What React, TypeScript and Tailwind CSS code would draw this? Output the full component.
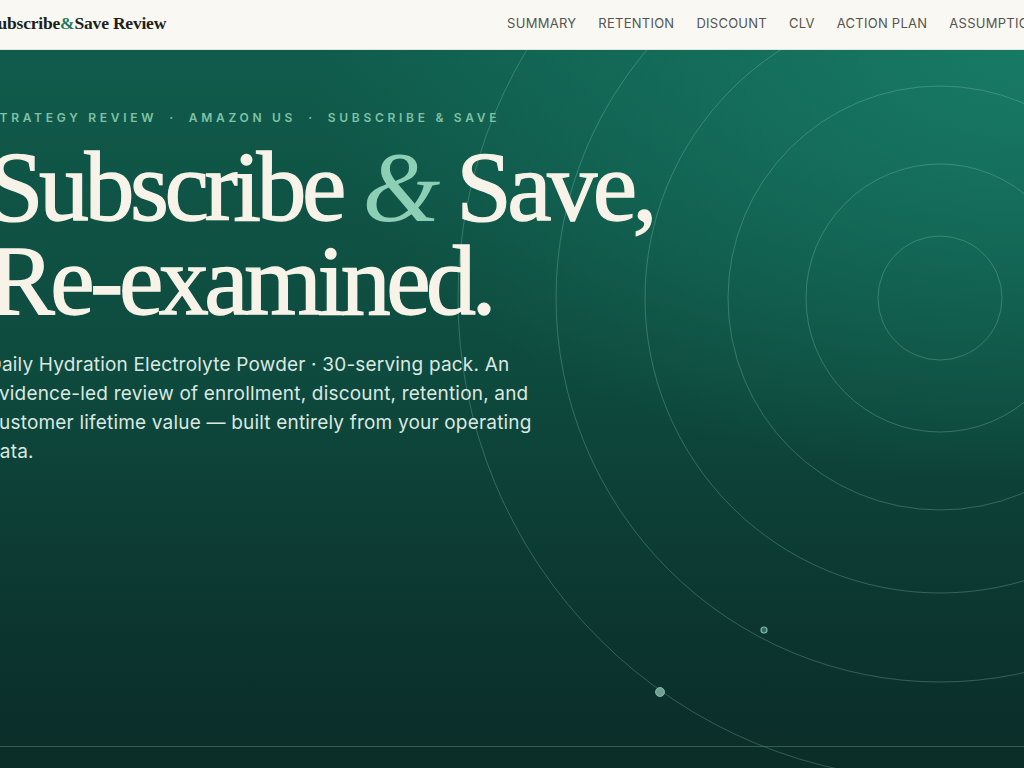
import React from "react"

const rings = [62, 134, 212, 295, 384, 482]

export default function App() {
  return (
    <div className="w-[1024px] h-[768px] overflow-hidden bg-[#0c3a31]" style={{ fontFamily: "Inter, 'Noto Sans', sans-serif" }}>
      {/* top bar */}
      <header className="h-[50px] bg-[#f9f8f3] border-b border-[#dfe6df] flex items-center overflow-hidden">
        <div className="flex items-center -ml-[12px] -mt-[2px] shrink-0 whitespace-nowrap">
          <a className="text-[17.5px] font-bold text-[#1c1f1c] tracking-[-0.2px]" style={{ fontFamily: "'Liberation Serif', serif" }}>
            Subscribe<span className="text-[#1f7a5e]">&amp;</span>Save Review
          </a>
          <nav className="ml-[341px] flex gap-[22px] text-[13px] tracking-[0.02em] text-[#55554f]">
            <a>SUMMARY</a>
            <a>RETENTION</a>
            <a>DISCOUNT</a>
            <a>CLV</a>
            <a>ACTION PLAN</a>
            <a>ASSUMPTIONS</a>
          </nav>
        </div>
      </header>

      {/* hero */}
      <section className="relative h-[718px] overflow-hidden bg-[radial-gradient(ellipse_70%_60%_at_100%_0%,#177a65_0%,rgba(23,122,101,0)_100%),linear-gradient(180deg,#105c4c_0%,#0e4a3e_45%,#0c3530_80%,#0b2d28_100%)]">
        <svg className="absolute inset-0" width="1024" height="718" viewBox="0 0 1024 718" fill="none">
          {rings.map((r) => (
            <circle key={r} cx="940" cy="248" r={r} stroke="#9fd8c2" strokeOpacity="0.28" strokeWidth="1" />
          ))}
          <circle cx="764" cy="580" r="3" fill="#2f6d5d" stroke="#9fd0bd" strokeOpacity="0.8" strokeWidth="1.2" />
          <circle cx="660" cy="642" r="4.5" fill="#6f9f90" stroke="#a7d3c3" strokeOpacity="0.7" strokeWidth="1" />
        </svg>

        <div className="relative -ml-[12px] pt-[59px]">
          <p className="text-[12px] font-semibold tracking-[0.31em] text-[#7fc3a6] whitespace-nowrap">
            STRATEGY REVIEW<span className="mx-[12px]">·</span>AMAZON US<span className="mx-[12px]">·</span>SUBSCRIBE &amp; SAVE
          </p>
          <h1 className="mt-[13px] text-[100px] leading-[94px] tracking-[-0.045em] text-[#f7f3e8] whitespace-nowrap [-webkit-text-stroke:1.3px_#f7f3e8]" style={{ fontFamily: "'Liberation Serif', serif" }}>
            Subscribe <span className="italic text-[#8dcfb5] [-webkit-text-stroke:0px]">&amp;</span> Save,
            <br />
            Re-examined.
          </h1>
          <p className="mt-[22px] w-[560px] text-[19px] leading-[29px] tracking-[0.01em] text-[#d9e8e1]">
            Daily Hydration Electrolyte Powder · 30-serving pack. An evidence-led review of enrollment, discount, retention, and customer lifetime value — built entirely from your operating data.
          </p>
        </div>

        <div className="absolute left-0 right-0 top-[696px] border-t border-[#3f7565]/70" />
      </section>
    </div>
  )
}
